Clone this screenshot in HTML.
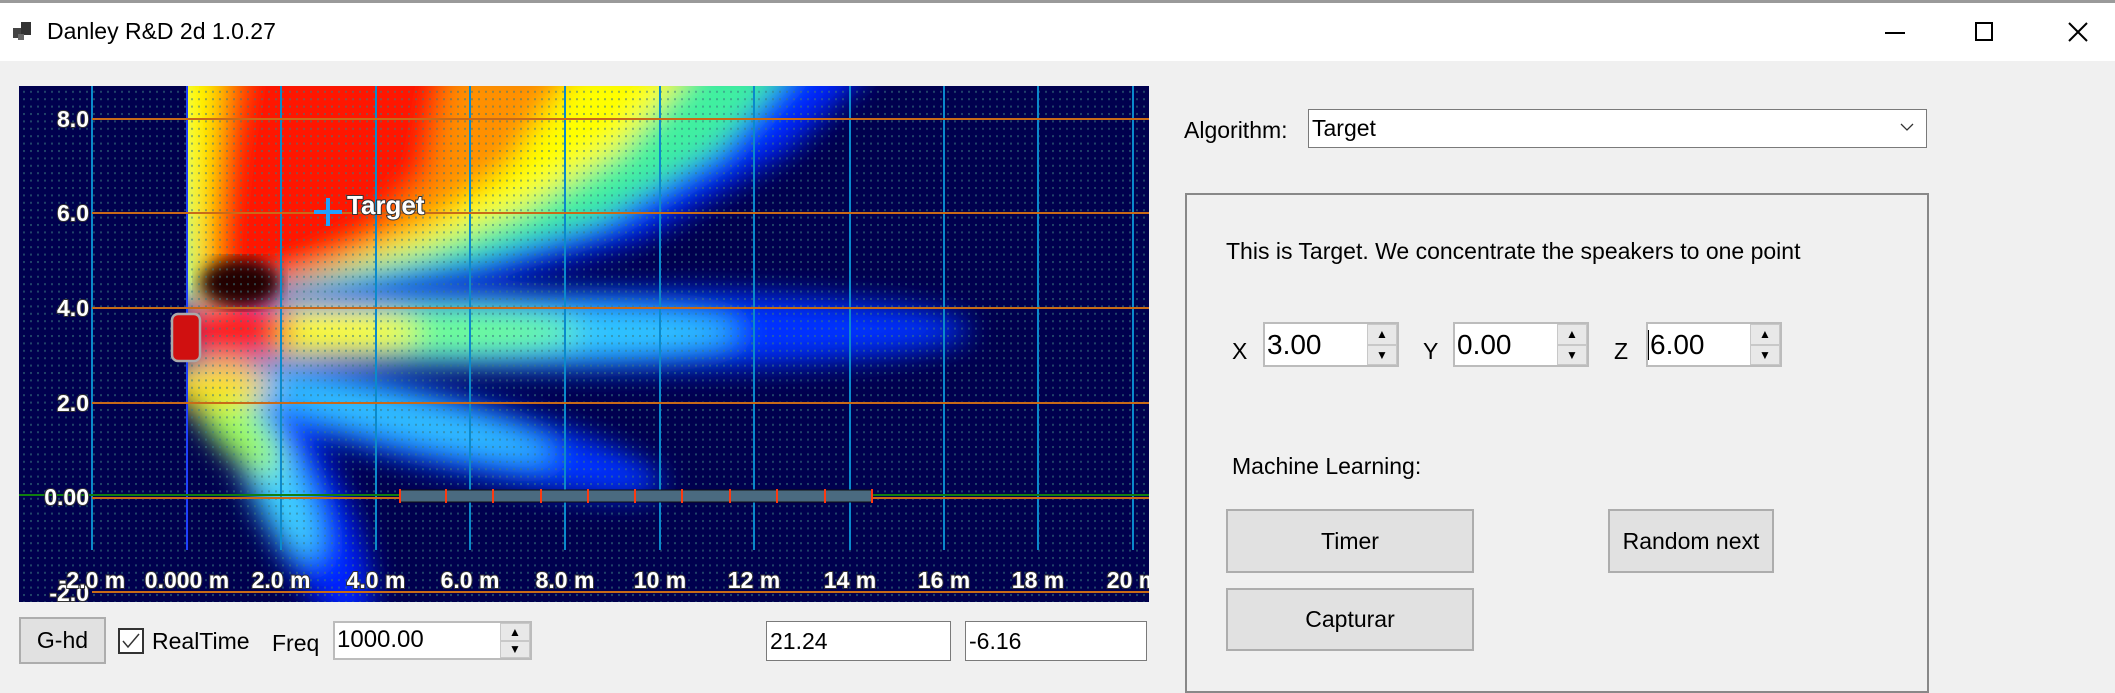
<!DOCTYPE html>
<html><head><meta charset="utf-8">
<style>
*{margin:0;padding:0;box-sizing:border-box}
body{width:2115px;height:684px;background:#f0f0f0;position:relative;overflow:hidden;font-family:"Liberation Sans",sans-serif;color:#000}
.a{position:absolute}
.t{font-size:23px;white-space:nowrap}
.btn{position:absolute;background:#e1e1e1;border:2px solid #adadad;display:flex;align-items:center;justify-content:center;font-size:23px}
.inp{position:absolute;background:#fff;border:1px solid #7a7a7a;font-size:23px;padding-left:3px;display:flex;align-items:center}
.spin{position:absolute;background:#fff;border:2px solid #bcbcbc}
.spin .v{position:absolute;left:2px;top:0;bottom:0;display:flex;align-items:center;font-size:28px}
.spin .b{position:absolute;right:0;width:30px;height:50%;background:#e8e8e8;border:1px solid #c8c8c8;display:flex;align-items:center;justify-content:center;font-size:12px}
</style></head><body>
<div class="a" style="left:0;top:0;width:2115px;height:61px;background:#fff;border-top:3px solid #9a9a9a"></div>
<svg class="a" style="left:12px;top:20px" width="22" height="22" viewBox="0 0 22 22"><rect x="1" y="8" width="8" height="10" fill="#444"/><rect x="9" y="2" width="10" height="13" fill="#333"/><rect x="6" y="14" width="6" height="6" fill="#666"/></svg>
<div class="a t" style="left:47px;top:18px;font-size:23px">Danley R&amp;D 2d 1.0.27</div>
<div class="a" style="left:1885px;top:32px;width:20px;height:2px;background:#000"></div>
<div class="a" style="left:1975px;top:22px;width:18px;height:19px;border:2px solid #000"></div>
<svg class="a" style="left:2067px;top:21px" width="22" height="22"><path d="M2 2L20 20M20 2L2 20" stroke="#000" stroke-width="2"/></svg>

<svg class="a" style="left:19px;top:86px" width="1130" height="516" viewBox="19 86 1130 516">
<defs>
<pattern id="dots" x="0" y="0" width="7" height="7.4" patternUnits="userSpaceOnUse"><rect x="2" y="2" width="2" height="2" fill="#3a7a80" opacity="0.55"/></pattern>
<filter id="bl" x="-20%" y="-20%" width="140%" height="140%"><feGaussianBlur stdDeviation="14"/></filter>
<filter id="bl2"><feGaussianBlur stdDeviation="8"/></filter>
<clipPath id="cp"><rect x="187" y="86" width="1000" height="520"/></clipPath>
</defs>
<rect x="19" y="86" width="1130" height="516" fill="#00004e"/>
<g clip-path="url(#cp)">
<g filter="url(#bl)">
<ellipse cx="300" cy="500" rx="140" ry="42" transform="rotate(64 300 500)" fill="#0020ff"/>
<ellipse cx="420" cy="425" rx="250" ry="38" transform="rotate(14 420 425)" fill="#0030ff"/>
<ellipse cx="390" cy="415" rx="170" ry="22" transform="rotate(14 390 415)" fill="#30c0ff"/>
<ellipse cx="270" cy="470" rx="100" ry="26" transform="rotate(64 270 470)" fill="#40d0ff"/>
<ellipse cx="230" cy="420" rx="70" ry="24" transform="rotate(50 230 420)" fill="#a0ff60"/>
<ellipse cx="215" cy="385" rx="55" ry="22" fill="#ffe000"/>
<ellipse cx="580" cy="330" rx="390" ry="40" fill="#0030ff"/>
<ellipse cx="470" cy="332" rx="270" ry="28" fill="#30c8ff"/>
<ellipse cx="390" cy="332" rx="190" ry="24" fill="#70ff90"/>
<ellipse cx="300" cy="332" rx="120" ry="24" fill="#ffff00"/>
<polygon points="140,60 880,60 790,150 640,240 500,280 350,296 250,305 140,310" fill="#0028ff"/>
<polygon points="140,60 800,60 720,150 600,222 470,262 330,285 220,298 140,300" fill="#40f0a0"/>
<polygon points="165,60 700,60 620,150 520,210 420,250 300,280 190,300" fill="#ffff00"/>
<polygon points="215,60 580,60 510,165 430,225 330,268 250,292 205,280" fill="#ff9000"/>
<polygon points="240,60 450,60 430,175 370,240 280,285 225,300 215,250 225,150" fill="#ff1500"/>
<ellipse cx="235" cy="330" rx="55" ry="30" fill="#ff2000"/>
</g>
<ellipse cx="240" cy="283" rx="40" ry="24" fill="#200000" filter="url(#bl2)"/>
</g>
<rect x="19" y="86" width="1130" height="516" fill="url(#dots)"/>
<g stroke="#0a8acc" stroke-width="2">
<line x1="92" y1="86" x2="92" y2="550"/><line x1="187" y1="86" x2="187" y2="550" stroke="#2040ff"/><line x1="281" y1="86" x2="281" y2="550"/><line x1="376" y1="86" x2="376" y2="550"/><line x1="470" y1="86" x2="470" y2="550"/><line x1="565" y1="86" x2="565" y2="550"/><line x1="660" y1="86" x2="660" y2="550"/><line x1="754" y1="86" x2="754" y2="550"/><line x1="850" y1="86" x2="850" y2="550"/><line x1="944" y1="86" x2="944" y2="550"/><line x1="1038" y1="86" x2="1038" y2="550"/><line x1="1133" y1="86" x2="1133" y2="550"/>
</g>
<g stroke="#c86a18" stroke-width="2">
<line x1="92" y1="119" x2="1149" y2="119"/><line x1="92" y1="213" x2="1149" y2="213"/><line x1="92" y1="308" x2="1149" y2="308"/><line x1="92" y1="403" x2="1149" y2="403"/><line x1="92" y1="498" x2="1149" y2="498"/><line x1="92" y1="592" x2="1149" y2="592"/>
</g>
<line x1="19" y1="495" x2="1149" y2="495" stroke="#108010" stroke-width="2"/>
<rect x="400" y="490" width="472" height="12" fill="#4a6a80" stroke="#111" stroke-width="1"/>
<g stroke="#ff3a10" stroke-width="2"><line x1="400" y1="489" x2="400" y2="503"/><line x1="446" y1="489" x2="446" y2="503"/><line x1="493" y1="489" x2="493" y2="503"/><line x1="541" y1="489" x2="541" y2="503"/><line x1="588" y1="489" x2="588" y2="503"/><line x1="635" y1="489" x2="635" y2="503"/><line x1="682" y1="489" x2="682" y2="503"/><line x1="730" y1="489" x2="730" y2="503"/><line x1="777" y1="489" x2="777" y2="503"/><line x1="825" y1="489" x2="825" y2="503"/><line x1="872" y1="489" x2="872" y2="503"/></g>
<rect x="172" y="314" width="28" height="47" rx="6" fill="#d01010" stroke="#aaa" stroke-width="2.5"/>
<g stroke="#20a0ff" stroke-width="4"><line x1="328" y1="198" x2="328" y2="226"/><line x1="314" y1="212" x2="342" y2="212"/></g>
<g font-family="Liberation Sans" font-weight="bold" fill="#fff" style="paint-order:stroke" stroke="#333" stroke-width="2">
<text x="347" y="214" font-size="26">Target</text>
<g font-size="23" text-anchor="end"><text x="89" y="127">8.0</text><text x="89" y="221">6.0</text><text x="89" y="316">4.0</text><text x="89" y="411">2.0</text><text x="89" y="505">0.00</text><text x="89" y="601">-2.0</text></g>
<g font-size="23" text-anchor="middle"><text x="92" y="588">-2.0 m</text><text x="187" y="588">0.000 m</text><text x="281" y="588">2.0 m</text><text x="376" y="588">4.0 m</text><text x="470" y="588">6.0 m</text><text x="565" y="588">8.0 m</text><text x="660" y="588">10 m</text><text x="754" y="588">12 m</text><text x="850" y="588">14 m</text><text x="944" y="588">16 m</text><text x="1038" y="588">18 m</text><text x="1133" y="588">20 m</text></g>
</g>
</svg>

<div class="btn" style="left:19px;top:617px;width:87px;height:47px">G-hd</div>
<div class="a" style="left:118px;top:628px;width:26px;height:26px;border:2px solid #333;background:#fff"></div>
<svg class="a" style="left:120px;top:630px" width="22" height="22"><path d="M3 11L8 17L19 4" stroke="#333" stroke-width="1.5" fill="none"/></svg>
<div class="a t" style="left:152px;top:628px">RealTime</div>
<div class="a t" style="left:272px;top:630px">Freq</div>
<div class="spin" style="left:333px;top:621px;width:199px;height:39px"><div class="v" style="font-size:24px;align-items:flex-start;top:3px">1000.00</div><div class="b" style="top:0">▲</div><div class="b" style="bottom:0">▼</div></div>
<div class="inp" style="left:766px;top:621px;width:185px;height:40px">21.24</div>
<div class="inp" style="left:965px;top:621px;width:182px;height:40px">-6.16</div>

<div class="a t" style="left:1184px;top:117px">Algorithm:</div>
<div class="inp" style="left:1308px;top:109px;width:619px;height:39px;font-size:23px;border-color:#7a7a7a">Target</div>
<svg class="a" style="left:1900px;top:122px" width="14" height="10"><path d="M1 2L7 8L13 2" stroke="#333" fill="none" stroke-width="1.3"/></svg>
<div class="a" style="left:1185px;top:193px;width:744px;height:500px;border:2px solid #888"></div>
<div class="a t" style="left:1226px;top:238px">This is Target. We concentrate the speakers to one point</div>
<div class="a t" style="left:1232px;top:338px">X</div>
<div class="spin" style="left:1263px;top:322px;width:136px;height:45px"><div class="v">3.00</div><div class="b" style="top:0">▲</div><div class="b" style="bottom:0">▼</div></div>
<div class="a t" style="left:1423px;top:338px">Y</div>
<div class="spin" style="left:1453px;top:322px;width:136px;height:45px"><div class="v">0.00</div><div class="b" style="top:0">▲</div><div class="b" style="bottom:0">▼</div></div>
<div class="a t" style="left:1614px;top:338px">Z</div>
<div class="spin" style="left:1646px;top:322px;width:136px;height:45px"><div class="v">6.00</div><div class="b" style="top:0">▲</div><div class="b" style="bottom:0">▼</div></div>
<div class="a" style="left:1648px;top:330px;width:1px;height:30px;background:#000"></div>
<div class="a t" style="left:1232px;top:453px">Machine Learning:</div>
<div class="btn" style="left:1226px;top:509px;width:248px;height:64px">Timer</div>
<div class="btn" style="left:1608px;top:509px;width:166px;height:64px">Random next</div>
<div class="btn" style="left:1226px;top:588px;width:248px;height:63px">Capturar</div>
</body></html>
